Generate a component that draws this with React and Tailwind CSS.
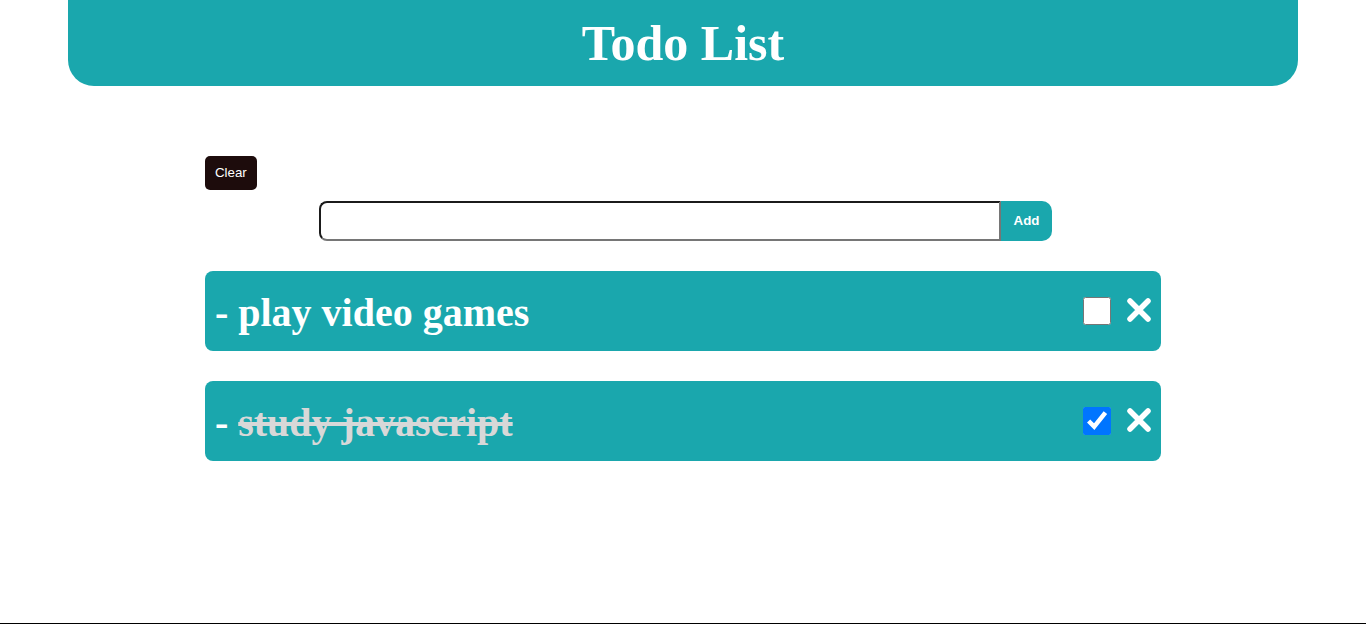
import React from "react";

function XIcon() {
  return (
    <svg width="28" height="28" viewBox="0 0 28 28" className="block -mt-[2px]">
      <path d="M5 5 L23 23 M23 5 L5 23" stroke="white" strokeWidth="5.5" strokeLinecap="round" fill="none" />
    </svg>
  );
}

function Item({ text, done }) {
  return (
    <div className="flex items-center justify-between h-[80px] rounded-[8px] bg-[#1aa7ad] pl-[10px] pr-[8px]">
      <div className="pt-[4px] text-[40px] font-bold text-white leading-none [font-family:'Liberation_Serif',serif]">
        -{" "}
        <span className={done ? "line-through text-[#d8d8d8]" : ""}>{text}</span>
      </div>
      <div className="flex items-center gap-[14px]">
        <input type="checkbox" defaultChecked={done} className="w-[28px] h-[28px] m-0" />
        <XIcon />
      </div>
    </div>
  );
}

export default function App() {
  return (
    <div className="min-h-[624px] border-b border-black bg-white [font-family:'Liberation_Sans',Arial,sans-serif]">
      <div className="w-[90%] mx-auto h-[86px] bg-[#1aa7ad] rounded-b-[26px] flex items-center justify-center">
        <h1 className="text-[50px] font-bold text-white leading-none [font-family:'Liberation_Serif',serif]">Todo List</h1>
      </div>
      <div className="w-[70%] mx-auto pt-[70px]">
        <button className="h-[34px] px-[10px] rounded-[5px] bg-[#1d0c0c] text-white text-[13.33px]">Clear</button>
        <div className="flex justify-center mt-[11px] pl-[5px]">
          <input
            type="text"
            className="w-[682px] h-[40px] rounded-l-[8px] border-2 border-t-[#1b1b1b] border-l-[#1b1b1b] border-b-[#767676] border-r-[#767676] outline-none px-2"
          />
          <button className="w-[51px] h-[40px] rounded-r-[10px] bg-[#1aa7ad] text-white text-[13.33px] font-bold">Add</button>
        </div>
        <div className="mt-[30px] flex flex-col gap-[30px]">
          <Item text="play video games" done={false} />
          <Item text="study javascript" done={true} />
        </div>
      </div>
    </div>
  );
}
